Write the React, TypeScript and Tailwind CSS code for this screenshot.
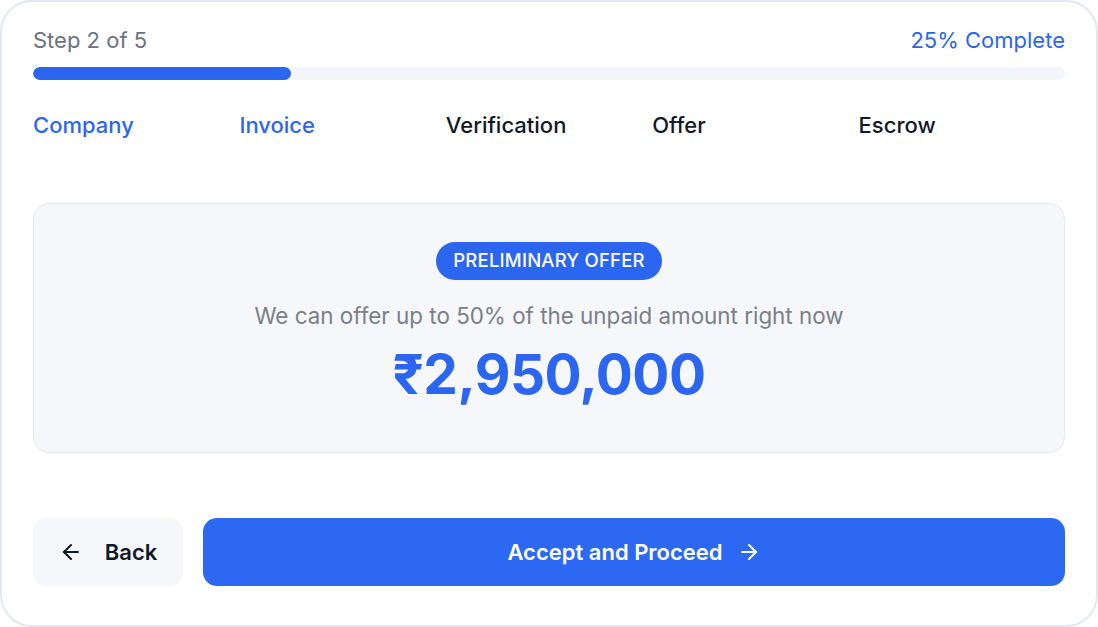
import React from 'react'
import { ArrowLeft, ArrowRight } from 'lucide-react'

const STEPS = ['Company', 'Invoice', 'Verification', 'Offer', 'Escrow']
const CURRENT = 2

export default function App() {
  const progress = 25

  return (
    <div
      className="w-[1098px] h-[627px] bg-white"
      style={{ fontFamily: 'Inter, "Noto Sans", sans-serif' }}
    >
      <div className="w-full h-full border-2 border-[#e2e8f0] rounded-[32px] px-[31px] pt-[22px]">
        {/* Progreso */}
        <div className="flex justify-between items-center text-[22px] leading-8">
          <span className="text-[#6b7280]">Step {CURRENT} of {STEPS.length}</span>
          <span className="text-[#2b66f0]">{progress}% Complete</span>
        </div>
        <div className="mt-[11px] h-[13px] rounded-full bg-[#f3f5fa] overflow-hidden">
          <div className="h-full rounded-full bg-[#2b66f0]" style={{ width: `${progress}%` }} />
        </div>

        {/* Pasos */}
        <div className="mt-[29px] grid grid-cols-5 text-[22px] leading-8 font-medium">
          {STEPS.map((step, i) => (
            <span key={step} className={i < CURRENT ? 'text-[#2b66f0]' : 'text-[#111827]'}>
              {step}
            </span>
          ))}
        </div>

        {/* Oferta */}
        <div className="mt-[62px] h-[250px] rounded-[16px] border border-[#e5e7eb] bg-[#f5f7fb] flex flex-col items-center pt-[38px]">
          <span className="h-[38px] px-[17px] rounded-full bg-[#2b66f0] text-white text-[18.5px] font-medium tracking-[0.2px] flex items-center">
            PRELIMINARY OFFER
          </span>
          <p className="mt-[20px] text-[22.4px] leading-8 text-[#7b7f87]">
            We can offer up to 50% of the unpaid amount right now
          </p>
          <p className="mt-[12px] text-[55px] leading-[60px] font-bold text-[#2b66f0] tracking-[-0.5px]">
            ₹2,950,000
          </p>
        </div>

        {/* Acciones */}
        <div className="mt-[65px] flex gap-5">
          <button className="h-[68px] w-[150px] rounded-[14px] bg-[#f5f7fb] flex items-center justify-center gap-[22px] text-[22px] font-semibold text-[#111827]">
            <ArrowLeft size={24} strokeWidth={2} />
            Back
          </button>
          <button className="h-[68px] flex-1 rounded-[14px] bg-[#2d68f2] flex items-center justify-center gap-[14px] text-[22px] font-semibold text-white">
            Accept and Proceed
            <ArrowRight size={24} strokeWidth={2} />
          </button>
        </div>
      </div>
    </div>
  )
}
